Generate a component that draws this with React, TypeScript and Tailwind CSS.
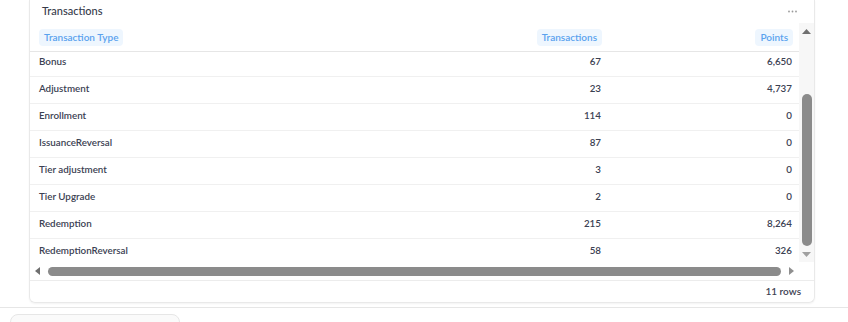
const ROWS = [
  { type: 'Bonus', count: '67', points: '6,650' },
  { type: 'Adjustment', count: '23', points: '4,737' },
  { type: 'Enrollment', count: '114', points: '0' },
  { type: 'IssuanceReversal', count: '87', points: '0' },
  { type: 'Tier adjustment', count: '3', points: '0' },
  { type: 'Tier Upgrade', count: '2', points: '0' },
  { type: 'Redemption', count: '215', points: '8,264' },
  { type: 'RedemptionReversal', count: '58', points: '326' },
];

const HeaderPill = ({ label }: { label: string }) => (
  <span className="inline-block h-[17px] px-[5px] rounded-[4px] bg-[#eef6fe] text-[#5aa2ee] text-[10px] font-semibold leading-[17px]">
    {label}
  </span>
);

const App = () => {
  return (
    <div className="w-[848px] h-[322px] bg-white overflow-hidden font-['Lato',sans-serif]">
      <div className="pl-[29px]">
        <div className="w-[786px] h-[303px] border border-t-0 border-[#e9e9e9] rounded-b-[6px] shadow-[0_1px_2px_rgba(0,0,0,0.05)] flex flex-col">
          <div className="h-[23px] flex items-center justify-between pl-[12px] pr-[17px]">
            <span className="text-[11px] font-medium text-[#363b4a]">Transactions</span>
            <svg width="9" height="3" viewBox="0 0 9 3" className="mb-[1px]">
              <circle cx="1" cy="1.5" r="0.9" fill="#9a9a9a" />
              <circle cx="4.5" cy="1.5" r="0.9" fill="#9a9a9a" />
              <circle cx="8" cy="1.5" r="0.9" fill="#9a9a9a" />
            </svg>
          </div>

          <div className="flex h-[257px]">
            <div className="w-[769px] flex flex-col">
              <div className="h-[239px] overflow-hidden flex flex-col">
                <div className="h-[29px] shrink-0 border-b border-[#e6e6e6] flex items-start pt-[6px] pl-[9px] pr-[6px]">
                  <div className="flex-1 flex">
                    <HeaderPill label="Transaction Type" />
                  </div>
                  <div className="w-[200px] flex justify-end">
                    <HeaderPill label="Transactions" />
                  </div>
                  <div className="w-[191px] flex justify-end">
                    <HeaderPill label="Points" />
                  </div>
                </div>
                {ROWS.map((row, i) => (
                  <div
                    key={row.type}
                    className={`shrink-0 flex items-center pl-[9px] pr-[6px] text-[9.8px] font-semibold text-[#3b4152] border-b border-[#f0f0f0] ${
                      i === 0 ? 'h-[25px] pb-[5px]' : 'h-[27px] pb-[3px]'
                    }`}
                  >
                    <div className="flex-1">{row.type}</div>
                    <div className="w-[200px] text-right pr-[1px]">{row.count}</div>
                    <div className="w-[191px] text-right pr-[1px]">{row.points}</div>
                  </div>
                ))}
              </div>
              <div className="h-[18px] flex items-center pl-[5px] pr-[5px] gap-[8px]">
                <svg width="5" height="8" viewBox="0 0 5 8">
                  <path d="M5 0 L0 4 L5 8 Z" fill="#6f6f6f" />
                </svg>
                <div className="flex-1 h-[9px] rounded-full bg-[#8b8b8b]" />
                <svg width="5" height="8" viewBox="0 0 5 8">
                  <path d="M0 0 L5 4 L0 8 Z" fill="#8f8f8f" />
                </svg>
              </div>
            </div>
            <div className="w-[15px] flex flex-col">
              <div className="h-[239px] bg-[#f7f7f7] flex flex-col items-center pt-[6px] pb-[5px]">
                <svg width="9" height="5" viewBox="0 0 9 5">
                  <path d="M0 5 L4.5 0 L9 5 Z" fill="#707070" />
                </svg>
                <div className="h-[60px]" />
                <div className="w-[10px] h-[152px] rounded-full bg-[#8b8b8b]" />
                <div className="flex-1" />
                <svg width="9" height="5" viewBox="0 0 9 5">
                  <path d="M0 0 L4.5 5 L9 0 Z" fill="#a0a0a0" />
                </svg>
              </div>
            </div>
          </div>

          <div className="flex-1 border-t border-[#ececec] flex items-center justify-end pr-[13px]">
            <span className="text-[10px] font-semibold text-[#3d4252]">11 rows</span>
          </div>
        </div>
      </div>

      <div className="mt-[4px] border-t border-[#e6e6e6]" />

      <div className="ml-[10px] mt-[6px] w-[170px] h-[20px] rounded-t-[8px] border border-[#e6e6e6] bg-[#fafafa]" />
    </div>
  );
};

export default App;
